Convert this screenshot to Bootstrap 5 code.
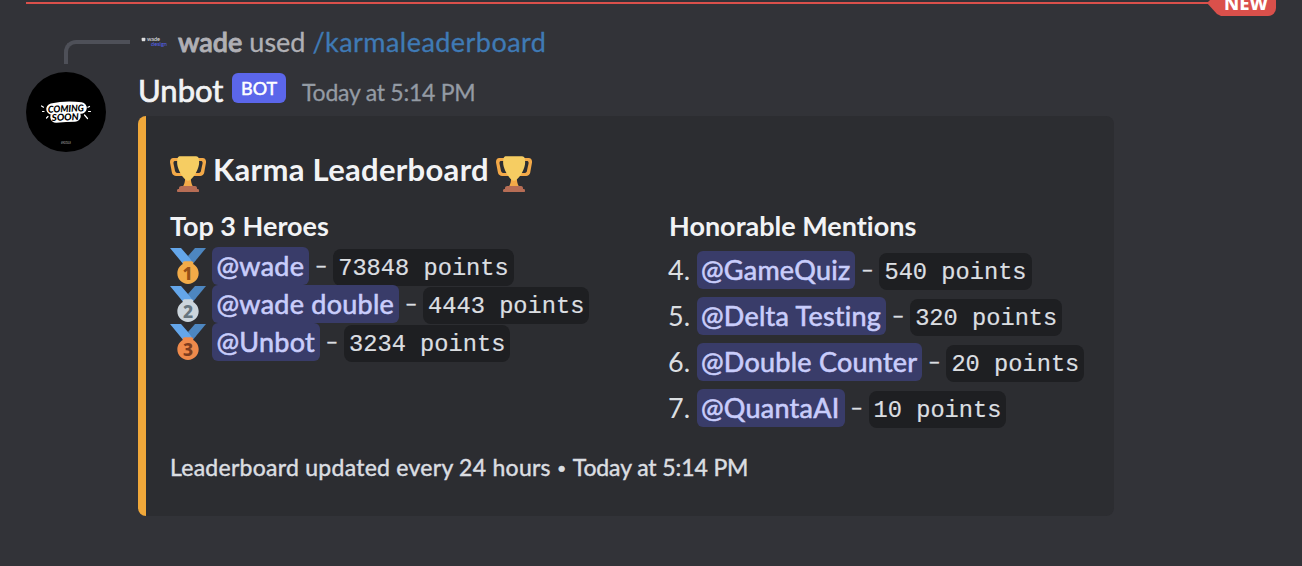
<!DOCTYPE html>
<html lang="en" data-bs-theme="dark">
<head>
<meta charset="utf-8">
<meta name="viewport" content="width=device-width, initial-scale=1">
<title>Karma Leaderboard</title>
<link href="https://cdn.jsdelivr.net/npm/bootstrap@5.3.0/dist/css/bootstrap.min.css" rel="stylesheet">
<style>
  body { background: #323338; color: #dbdee1; font-family: Lato, "Noto Sans", sans-serif; font-size: 27px; font-variant-ligatures: none; height: 566px; overflow: hidden; }
  .new-divider { height: 16px; padding: 0 26px; }
  .new-line { height: 2px; margin-top: 2px; background: #da504b; }
  .new-tag { width: 69px; height: 16px; margin-left: -1px; background: #da504b; clip-path: polygon(0 3px, 3px 0, 100% 0, 100% 100%, 14px 100%, 10px 14px); border-bottom-right-radius: 8px; color: #fff; font: 800 18.5px/22px "Noto Sans", sans-serif; padding-left: 17px; }
  .new-tag span { display: block; margin-top: -8px; }
  .gutter { width: 138px; padding-left: 26px; }
  .reply-row { height: 40px; margin-top: 8px; }
  .spine { width: 66px; height: 24px; margin: 16px 0 0 38px; border: solid #4e5058; border-width: 4px 0 0 4px; border-top-left-radius: 12px; }
  .reply-text { color: #b0b0b5; line-height: 36px; -webkit-text-stroke: .3px; }
  .reply-text .fw-semibold { -webkit-text-stroke: .8px; }
  .command { color: #3f7ab5; letter-spacing: .45px; }
  .message-head { height: 44px; margin-top: 8px; }
  .author { font-size: 31px; line-height: 36px; color: #f2f3f5; -webkit-text-stroke: .7px; }
  .bot-tag { width: 54px; height: 30px; background: #5b66ea; border-radius: 6px; color: #fff; font-size: 18px; line-height: 30px; margin: 1px 16px 0 8.7px; -webkit-text-stroke: .5px; }
  .stamp { font-size: 23px; letter-spacing: -.25px; line-height: 41px; color: #949ba4; -webkit-text-stroke: .3px; }
  .embed { width: 976px; height: 400px; background: #2c2d31; border-left: 8px solid #f0a83a; border-radius: 8px; padding: 36px 24px 0; }
  .embed-title { height: 40px; font-size: 31px; font-weight: 700; line-height: 36px; color: #f2f3f5; }
  .title-text { letter-spacing: .3px; margin: -1px 7px 0; }
  .emoji { width: 36px; height: 36px; flex: none; }
  .field-name { font-weight: 700; line-height: 38px; margin-bottom: 2px; color: #f2f3f5; }
  .fields { height: 245px; margin-top: 15px; }
  .field-left { width: 498px; }
  .field-right .field-name { margin: 0 0 6px 1px; }
  .entry { height: 38px; line-height: 38px; white-space: pre; }
  .entry .emoji { margin: 1px 6px 0 0; }
  .mention { height: 38px; padding: 0 5px 0 4.5px; border-radius: 6px; background: #393c69; color: #c9cdfb; letter-spacing: .25px; -webkit-text-stroke: .6px; }
  .points { height: 37px; margin-top: 2px; padding: 0 5px; border-radius: 8px; background: #1e1f22; color: #dbdee1; font: 23.7px/40px "Liberation Mono", monospace; -webkit-text-stroke: .2px; }
  .dash { width: 24px; text-align: center; font-size: 22px; line-height: 36px; -webkit-text-stroke: .4px; }
  .rank { width: 28.5px; margin-left: 0; }
  .embed-foot { font-size: 23px; line-height: 30px; letter-spacing: .27px; -webkit-text-stroke: .45px; }
  .foot-time { letter-spacing: -.1px; }
  .dot { font-size: 16px; vertical-align: 2px; }
</style>
</head>
<body>
<div class="new-divider d-flex">
  <div class="new-line flex-grow-1"></div>
  <div class="new-tag"><span>NEW</span></div>
</div>

<div class="reply-row d-flex">
  <div class="gutter p-0 flex-shrink-0"><div class="spine ms-auto me-2"></div></div>
  <svg width="40" height="40" class="flex-shrink-0" viewBox="0 0 40 40">
    <path d="M4 14h3v3h-3zM3 15h5" fill="#ddd" stroke="#ddd" stroke-width=".4"/>
    <text x="9" y="17" font-size="5.500" fill="#e4e4e8" font-family="Lato" textLength="13" lengthAdjust="spacingAndGlyphs">wade</text>
    <text x="13" y="21.500" font-size="5.500" fill="#5462f0" font-family="Lato" textLength="16" lengthAdjust="spacingAndGlyphs">design</text>
  </svg>
  <div class="reply-text"><span class="fw-semibold">wade</span> used <span class="command">/karmaleaderboard</span></div>
</div>

<div class="d-flex">
  <div class="gutter flex-shrink-0 pt-2">
    <svg width="80" height="80" viewBox="0 0 80 80">
      <circle cx="40" cy="40" r="40"/>
      <g font-family="Lato" font-weight="900" font-style="italic" font-size="9.500" text-anchor="middle" fill="#000">
        <path d="M26 37q14-3 29-1M30 45q10-1 19-1" fill="none" stroke="#fff" stroke-width="11.500" stroke-linecap="round"/>
        <g transform="rotate(-2 40 40)">
          <text x="40" y="40" textLength="36" lengthAdjust="spacingAndGlyphs">COMING</text>
          <text x="39" y="48.500" textLength="27" lengthAdjust="spacingAndGlyphs">SOON</text>
        </g>
      </g>
      <path d="M15.500 34l2 1.200M16.500 39.500h1.500M20.500 46l1.500-1.500M63.500 34.500l-1.500.800M62.500 39.500h2M58.500 43l3 3.500" stroke="#fff" stroke-width="1.200" stroke-linecap="round"/>
      <text x="40" y="71.500" font-size="3" fill="#bbb" text-anchor="middle" font-family="Lato" textLength="10" lengthAdjust="spacingAndGlyphs">#MODULE</text>
    </svg>
  </div>
  <div>
    <div class="message-head d-flex">
      <span class="author">Unbot</span><span class="bot-tag text-center">BOT</span><span class="stamp">Today at 5:14 PM</span>
    </div>
    <div class="embed">
      <div class="embed-title d-flex">
        <svg class="emoji mt-1" viewBox="0 0 36 36"><g id="trophy">
          <path fill="#f3a948" d="M5.123 5h6C12.227 5 13 4.896 13 6V4c0-1.104-.773-2-1.877-2h-8c-2 0-3.583 2.125-3 5 0 0 1.791 9.375 1.917 9.958C2.373 18.500 4.164 20 6.081 20h6.958c1.105 0-.039-1.896-.039-3v-2c0 1.104-.773 2-1.877 2h-4c-1.104 0-1.833-1.042-2-2S3.539 7.667 3.539 7.667C3.206 5.750 4.018 5 5.123 5zm25.812 0h-6C23.831 5 22 4.896 22 6V4c0-1.104 1.831-2 2.935-2h8c2 0 3.584 2.125 3 5 0 0-1.633 9.419-1.771 10-.354 1.500-2.042 3-4 3h-7.146C21.914 20 22 18.104 22 17v-2c0 1.104 1.831 2 2.935 2h4c1.104 0 1.834-1.042 2-2s1.584-7.333 1.584-7.333C32.851 5.750 32.040 5 30.935 5zM20.832 22c0-6.958-2.709 0-2.709 0s-3-6.958-3 0-3.291 10-3.291 10h12.292s-3.292-3.042-3.292-10z"/>
          <path fill="#f6cd62" d="M29.123 6.577c0 6.775-6.770 18.192-11 18.192-4.231 0-11-11.417-11-18.192 0-5.195 1-6.319 3-6.319 1.374 0 6.025-.027 8-.027l7-.001c2.917-.001 4 .684 4 6.347z"/>
          <path fill="#b76d55" d="M27 33c0 1.104.227 2-.877 2h-16C9.018 35 9 34.104 9 33v-1c0-1.104 1.164-2 2.206-2h13.917c1.042 0 1.877.896 1.877 2v1zM29 34.625c0 .760.165 1.375-1.252 1.375H8.498C7.206 36 7 35.385 7 34.625v-.250C7 33.615 7.738 33 8.498 33h19.250c.759 0 1.252.615 1.252 1.375v.250z"/>
        </g></svg>
        <span class="title-text">Karma Leaderboard</span>
        <svg class="emoji mt-1" viewBox="0 0 36 36"><use href="#trophy"/></svg>
      </div>

      <div class="fields d-flex">
        <div class="field-left">
          <div class="field-name">Top 3 Heroes</div>
          <div class="entry d-flex">
            <svg class="emoji" viewBox="0 0 36 36"><g id="ribbon"><path fill="#64a6ea" d="M18 8l-7-8H0l14 17 11.521-4.750z"/><path fill="#4d86c0" d="M25 0l-7 8 5.390 7.312 1.227-1.489L36 0z"/></g><path fill="#f2ab48" d="M23.205 16.026c.080-.217.131-.448.131-.693 0-1.104-.896-2-2-2h-6.667c-1.105 0-2 .896-2 2 0 .245.050.476.131.693-3.258 1.826-5.464 5.307-5.464 9.307C7.335 31.224 12.111 36 18.002 36s10.667-4.776 10.667-10.667c0-4-2.206-7.481-5.464-9.307z"/><text x="17.500" y="31.500" text-anchor="middle" font-family="Noto Sans" font-weight="800" font-size="17.500" fill="#955017">1</text></svg>
            <span class="mention">@wade</span><span class="dash">–</span><span class="points">73848 points</span>
          </div>
          <div class="entry d-flex">
            <svg class="emoji" viewBox="0 0 36 36"><use href="#ribbon"/><path fill="#ccd5dc" d="M23.205 16.026c.080-.217.131-.448.131-.693 0-1.104-.896-2-2-2h-6.667c-1.105 0-2 .896-2 2 0 .245.050.476.131.693-3.258 1.826-5.464 5.307-5.464 9.307C7.335 31.224 12.111 36 18.002 36s10.667-4.776 10.667-10.667c0-4-2.206-7.481-5.464-9.307z"/><text x="18" y="31.500" text-anchor="middle" font-family="Noto Sans" font-weight="800" font-size="17.500" fill="#66757f">2</text></svg>
            <span class="mention">@wade double</span><span class="dash">–</span><span class="points">4443 points</span>
          </div>
          <div class="entry d-flex">
            <svg class="emoji" viewBox="0 0 36 36"><use href="#ribbon"/><path fill="#ef8a4b" d="M23.205 16.026c.080-.217.131-.448.131-.693 0-1.104-.896-2-2-2h-6.667c-1.105 0-2 .896-2 2 0 .245.050.476.131.693-3.258 1.826-5.464 5.307-5.464 9.307C7.335 31.224 12.111 36 18.002 36s10.667-4.776 10.667-10.667c0-4-2.206-7.481-5.464-9.307z"/><text x="18" y="31.500" text-anchor="middle" font-family="Noto Sans" font-weight="800" font-size="17.500" fill="#7c3d20">3</text></svg>
            <span class="mention">@Unbot</span><span class="dash">–</span><span class="points">3234 points</span>
          </div>
        </div>
        <div class="field-right">
          <div class="field-name">Honorable Mentions</div>
          <div class="vstack gap-2 flex-grow-0">
            <div class="entry d-flex"><span class="rank">4.</span><span class="mention">@GameQuiz</span><span class="dash">–</span><span class="points">540 points</span></div>
            <div class="entry d-flex"><span class="rank">5.</span><span class="mention">@Delta Testing</span><span class="dash">–</span><span class="points">320 points</span></div>
            <div class="entry d-flex"><span class="rank">6.</span><span class="mention">@Double Counter</span><span class="dash">–</span><span class="points">20 points</span></div>
            <div class="entry d-flex"><span class="rank">7.</span><span class="mention">@QuantaAI</span><span class="dash">–</span><span class="points">10 points</span></div>
          </div>
        </div>
      </div>

      <div class="embed-foot">Leaderboard updated every 24 hours <span class="dot">•</span> <span class="foot-time">Today at 5:14 PM</span></div>
    </div>
  </div>
</div>
<script src="https://cdn.jsdelivr.net/npm/bootstrap@5.3.0/dist/js/bootstrap.bundle.min.js"></script>
</body>
</html>
